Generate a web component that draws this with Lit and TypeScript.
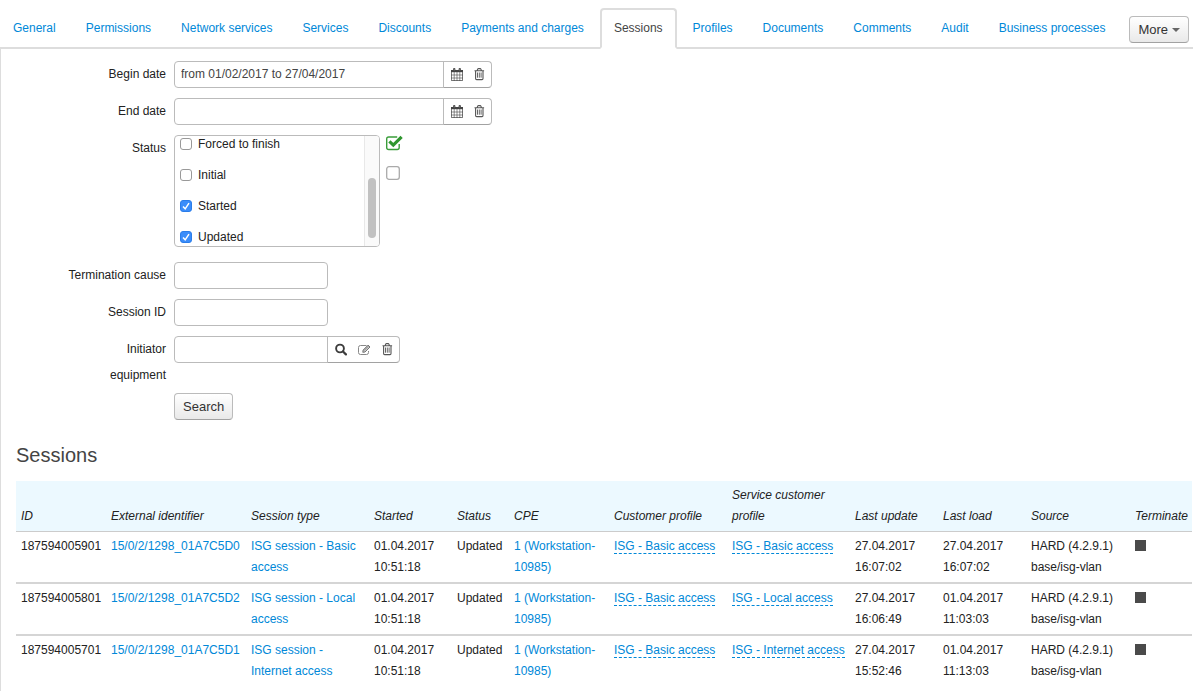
import { LitElement, html, css, svg, nothing } from "lit";
import { customElement, state } from "lit/decorators.js";

interface Tab {
  label: string;
  active?: boolean;
}

interface Session {
  id: string;
  external: string;
  type: string;
  started: string;
  status: string;
  cpe: string;
  customerProfile: string;
  serviceProfile: string;
  lastUpdate: string;
  lastLoad: string;
  source: string;
}

const TABS: Tab[] = [
  { label: "General" },
  { label: "Permissions" },
  { label: "Network services" },
  { label: "Services" },
  { label: "Discounts" },
  { label: "Payments and charges" },
  { label: "Sessions", active: true },
  { label: "Profiles" },
  { label: "Documents" },
  { label: "Comments" },
  { label: "Audit" },
  { label: "Business processes" },
];

const COLUMNS: [string, string][] = [
  ["ID", "c-id"],
  ["External identifier", "c-ext"],
  ["Session type", "c-type"],
  ["Started", "c-started"],
  ["Status", "c-status"],
  ["CPE", "c-cpe"],
  ["Customer profile", "c-customer"],
  ["Service customer profile", "c-service"],
  ["Last update", "c-update"],
  ["Last load", "c-load"],
  ["Source", "c-source"],
  ["Terminate", "c-term"],
];

const SESSIONS: Session[] = [
  {
    id: "187594005901",
    external: "15/0/2/1298_01A7C5D0",
    type: "ISG session - Basic access",
    started: "01.04.2017 10:51:18",
    status: "Updated",
    cpe: "1 (Workstation-10985)",
    customerProfile: "ISG - Basic access",
    serviceProfile: "ISG - Basic access",
    lastUpdate: "27.04.2017 16:07:02",
    lastLoad: "27.04.2017 16:07:02",
    source: "HARD (4.2.9.1) base/isg-vlan",
  },
  {
    id: "187594005801",
    external: "15/0/2/1298_01A7C5D2",
    type: "ISG session - Local access",
    started: "01.04.2017 10:51:18",
    status: "Updated",
    cpe: "1 (Workstation-10985)",
    customerProfile: "ISG - Basic access",
    serviceProfile: "ISG - Local access",
    lastUpdate: "27.04.2017 16:06:49",
    lastLoad: "01.04.2017 11:03:03",
    source: "HARD (4.2.9.1) base/isg-vlan",
  },
  {
    id: "187594005701",
    external: "15/0/2/1298_01A7C5D1",
    type: "ISG session - Internet access",
    started: "01.04.2017 10:51:18",
    status: "Updated",
    cpe: "1 (Workstation-10985)",
    customerProfile: "ISG - Basic access",
    serviceProfile: "ISG - Internet access",
    lastUpdate: "27.04.2017 15:52:46",
    lastLoad: "01.04.2017 11:13:03",
    source: "HARD (4.2.9.1) base/isg-vlan",
  },
];

const icon = (width: number, height: number, body: unknown) => html`
  <svg class="icon" width=${width} height=${height} viewBox="0 0 ${width} ${height}" aria-hidden="true">
    ${body}
  </svg>
`;

const calendarIcon = icon(12, 13, svg`
  <path d="M0.4 3h11.2v9.600h-11.2z" fill="#fff" stroke="#444" stroke-width="0.8" />
  <path d="M0 2h12v2.200h-12z" fill="#444" />
  <path d="M2.600 0.500h1.300v2.500h-1.300zM8.100 0.500h1.300v2.500h-1.300z" fill="#999" stroke="#444" stroke-width="0.900" />
  <path d="M3.200 4v9M6 4v9M8.800 4v9M0 7h12M0 10h12" fill="none" stroke="#444" stroke-width="0.600" />
`);

const trashIcon = icon(11, 13, svg`
  <path d="M0.500 2.700h9.600M3.200 2.500l0.500-1.400q0.200-0.500 0.800-0.500h1.600q0.600 0 0.800 0.500l0.500 1.400" fill="none" stroke="#555" stroke-width="1.100" />
  <path d="M1.600 3v7.500q0 1.100 1 1.100h5.400q1 0 1-1.100V3" fill="none" stroke="#555" stroke-width="1.100" />
  <path d="M3.500 4.500v5.200M5.300 4.500v5.200M7.100 4.500v5.200" fill="none" stroke="#555" stroke-width="0.900" />
`);

const searchIcon = icon(12, 13, svg`
  <circle cx="5" cy="5.500" r="3.900" fill="none" stroke="#3c3c3c" stroke-width="1.900" />
  <path d="M8 8.500l2.900 2.900" fill="none" stroke="#3c3c3c" stroke-width="2.200" stroke-linecap="round" />
`);

const editIcon = icon(13, 12, svg`
  <path d="M8.500 1.500h-6q-2 0-2 2v5q0 2 2 2h6q2 0 2-2v-1.500" fill="none" stroke="#888" />
  <path d="M4.800 8.300l0.300-2.200 5-5 1.900 1.900-5 5z" fill="#ccc" stroke="#666" stroke-width="0.900" />
  <path d="M6 6.600l4.500-4.500" fill="none" stroke="#777" stroke-width="0.800" />
`);

const checkedIcon = icon(17, 16, svg`
  <path d="M13.2 9v3.500q0 2-2 2h-8.500q-2 0-2-2v-8.500q0-2 2-2h8.500" fill="none" stroke="#3a9d3a" stroke-width="1.400" />
  <path d="M3.400 6.400l3.900 3.700 8.300-8.200" fill="none" stroke="#2f962f" stroke-width="3.200" />
`);

const uncheckedIcon = icon(17, 16, svg`
  <rect x="0.700" y="1.700" width="12.600" height="12.600" rx="2.300" fill="none" stroke="#aaa" stroke-width="1.300" />
`);

@customElement("app-root")
export class AppRoot extends LitElement {
  @state() private statuses = [
    { label: "Forced to finish", checked: false },
    { label: "Initial", checked: false },
    { label: "Started", checked: true },
    { label: "Updated", checked: true },
  ];

  static styles = css`
    :host {
      display: block;
      box-sizing: border-box;
      min-height: 100vh;
      background: #fff;
      color: #222;
      font-family: "Liberation Sans", Arial, Helvetica, sans-serif;
      font-size: 12px;
    }
    *,
    *::before {
      box-sizing: border-box;
    }
    a {
      color: #0088d8;
      text-decoration: none;
    }
    .icon {
      display: block;
      flex: none;
    }

    .tabs {
      display: flex;
      align-items: flex-end;
      padding-top: 8px;
      border-bottom: 2px solid #ddd;
      white-space: nowrap;
    }
    .tab-list {
      display: flex;
      gap: 2px;
      margin: 0 0 -2px -1px;
      padding: 0;
      list-style: none;
    }
    .tab {
      display: block;
      height: 41px;
      padding: 0 12px;
      border: 2px solid transparent;
      line-height: 36px;
    }
    .tab.active {
      border-color: #ddd #ddd #fff;
      border-radius: 4px 4px 0 0;
      background: #fff;
      color: #444;
    }

    .button {
      height: 27px;
      padding: 0 8px;
      border: 1px solid #bbb;
      border-bottom-color: #a2a2a2;
      border-radius: 4px;
      background: linear-gradient(#fff, #e9e9e9);
      color: #333;
      font: 13px "Liberation Sans", Arial, sans-serif;
    }
    .more {
      display: flex;
      align-items: center;
      gap: 4px;
      margin: 0 4px 4px auto;
    }

    .panel {
      min-height: calc(100vh - 49px);
      padding: 12px 1px 0 15px;
      border-left: 1px solid #ddd;
    }
    .form {
      display: grid;
      grid-template-columns: 98px 1fr;
      column-gap: 8px;
      align-items: start;
      padding-left: 52px;
    }
    .label {
      margin-bottom: 5px;
      line-height: 26px;
      text-align: right;
    }
    .field {
      display: flex;
      margin-bottom: 10px;
    }
    .field.status {
      gap: 6px;
      margin-bottom: 15px;
    }
    .field.submit {
      grid-column: 2;
    }
    .input {
      width: 154px;
      height: 27px;
      padding: 0 6px 2px;
      border: 1px solid #bbb;
      border-radius: 4px;
      background: #fff;
      color: #444;
      font: 12px "Liberation Sans", Arial, sans-serif;
    }
    .input.date {
      width: 270px;
    }
    .input.joined {
      border-radius: 4px 0 0 4px;
    }
    .addon {
      display: flex;
      align-items: center;
      gap: 11px;
      height: 27px;
      margin-left: -1px;
      padding: 0 6px 0 7px;
      border: 1px solid #bbb;
      border-bottom-color: #a2a2a2;
      border-radius: 0 4px 4px 0;
    }
    .icon-button {
      padding: 0;
      border: 0;
      background: none;
    }

    .status-box {
      display: flex;
      width: 206px;
      height: 112px;
      overflow: hidden;
      border: 1px solid #bbb;
      border-radius: 4px;
    }
    .options {
      flex: 1;
      margin-top: -8px;
      padding-left: 5px;
    }
    .option {
      display: flex;
      align-items: center;
      gap: 6px;
      height: 31px;
    }
    .check {
      flex: none;
      width: 12px;
      height: 12px;
      margin: 0;
      border: 1px solid #999;
      border-radius: 3px;
      background: #fff;
      appearance: none;
    }
    .check:checked {
      border-color: #2b7de9;
      background: #3b8dfa
        url("data:image/svg+xml,%3Csvg xmlns='http://www.w3.org/2000/svg' viewBox='0 0 10 10'%3E%3Cpath d='M2 5.400l2.200 2.400L8 2.200' fill='none' stroke='white' stroke-width='1.500'/%3E%3C/svg%3E");
    }
    .track {
      width: 15px;
      padding: 42px 3px 8px;
      border-left: 1px solid #e8e8e8;
      background: #fafafa;
    }
    .thumb {
      height: 60px;
      border-radius: 4px;
      background: #c1c1c1;
    }
    .toggles {
      display: flex;
      flex-direction: column;
      gap: 14px;
    }

    .title {
      margin: 13px 0 13px;
      color: #444;
      font-size: 20px;
      font-weight: 400;
      line-height: 25px;
    }

    .sessions {
      width: 100%;
      border-collapse: separate;
      border-spacing: 0;
      table-layout: fixed;
      line-height: 21px;
    }
    .sessions th,
    .sessions td {
      padding: 4px 5px;
      text-align: left;
    }
    .sessions th {
      border-bottom: 1px solid #ccc;
      background: #ecf9ff;
      font-style: italic;
      font-weight: 400;
      vertical-align: bottom;
    }
    .sessions td {
      border-bottom: 2px solid #d5d5d5;
      vertical-align: top;
    }
    .sessions tr:last-child td {
      border-bottom: 0;
    }
    .c-id { width: 90px; }
    .c-ext { width: 140px; }
    .c-type { width: 123px; }
    .c-started { width: 83px; }
    .c-status { width: 57px; }
    .c-cpe { width: 100px; }
    .c-customer { width: 118px; }
    .c-service { width: 123px; }
    .c-update { width: 88px; }
    .c-load { width: 88px; }
    .c-source { width: 104px; }
    .c-term { width: 62px; }
    .nowrap {
      white-space: nowrap;
    }
    .dashed {
      border-bottom: 1px dashed #0088d8;
    }
    .stop {
      display: block;
      width: 11px;
      height: 11px;
      margin-top: 4px;
      padding: 0;
      border: 0;
      background: #4a4a4a;
    }
  `;

  private toggle(index: number, event: Event) {
    const checked = (event.target as HTMLInputElement).checked;
    this.statuses = this.statuses.map((s, i) => (i === index ? { ...s, checked } : s));
  }

  private setAll(checked: boolean) {
    this.statuses = this.statuses.map((s) => ({ ...s, checked }));
  }

  private iconButton(name: string, glyph: unknown) {
    return html`<button type="button" class="icon-button" aria-label=${name}>${glyph}</button>`;
  }

  private dateRow(id: string, label: string, value: string) {
    return html`
      <label class="label" for=${id}>${label}</label>
      <div class="field">
        <input class="input date joined" id=${id} type="text" .value=${value} />
        <span class="addon">
          ${this.iconButton("Pick date", calendarIcon)} ${this.iconButton("Clear", trashIcon)}
        </span>
      </div>
    `;
  }

  private textRow(id: string, label: string) {
    return html`
      <label class="label" for=${id}>${label}</label>
      <div class="field"><input class="input" id=${id} type="text" /></div>
    `;
  }

  private sessionRow(s: Session) {
    return html`
      <tr>
        <td>${s.id}</td>
        <td class="nowrap"><a href="#">${s.external}</a></td>
        <td><a href="#">${s.type}</a></td>
        <td>${s.started}</td>
        <td>${s.status}</td>
        <td><a href="#">${s.cpe}</a></td>
        <td class="nowrap"><a class="dashed" href="#">${s.customerProfile}</a></td>
        <td class="nowrap"><a class="dashed" href="#">${s.serviceProfile}</a></td>
        <td>${s.lastUpdate}</td>
        <td>${s.lastLoad}</td>
        <td>${s.source}</td>
        <td><button type="button" class="stop" aria-label="Terminate"></button></td>
      </tr>
    `;
  }

  render() {
    return html`
      <nav class="tabs">
        <ul class="tab-list">
          ${TABS.map(
            (t) => html`<li>
              <a class="tab ${t.active ? "active" : ""}" href="#" aria-current=${t.active ? "page" : nothing}>${t.label}</a>
            </li>`
          )}
        </ul>
        <button type="button" class="button more">
          More
          <svg class="icon" width="8" height="4" viewBox="0 0 8 4" aria-hidden="true">
            <path d="M0 0h8L4 4z" fill="#666" />
          </svg>
        </button>
      </nav>
      <main class="panel">
        <form class="form" @submit=${(e: Event) => e.preventDefault()}>
          ${this.dateRow("begin", "Begin date", "from 01/02/2017 to 27/04/2017")}
          ${this.dateRow("end", "End date", "")}
          <span class="label" id="status-label">Status</span>
          <div class="field status" role="group" aria-labelledby="status-label">
            <div class="status-box">
              <div class="options">
                ${this.statuses.map(
                  (s, i) => html`<label class="option">
                    <input class="check" type="checkbox" .checked=${s.checked} @change=${(e: Event) => this.toggle(i, e)} />
                    ${s.label}
                  </label>`
                )}
              </div>
              <div class="track"><div class="thumb"></div></div>
            </div>
            <div class="toggles">
              <button type="button" class="icon-button" aria-label="Select all" @click=${() => this.setAll(true)}>
                ${checkedIcon}
              </button>
              <button type="button" class="icon-button" aria-label="Select none" @click=${() => this.setAll(false)}>
                ${uncheckedIcon}
              </button>
            </div>
          </div>
          ${this.textRow("cause", "Termination cause")} ${this.textRow("session", "Session ID")}
          <label class="label" for="equipment">Initiator equipment</label>
          <div class="field">
            <input class="input joined" id="equipment" type="text" />
            <span class="addon">
              ${this.iconButton("Find", searchIcon)} ${this.iconButton("Edit", editIcon)}
              ${this.iconButton("Clear", trashIcon)}
            </span>
          </div>
          <div class="field submit"><button type="submit" class="button">Search</button></div>
        </form>
        <h2 class="title">Sessions</h2>
        <table class="sessions">
          <thead>
            <tr>
              ${COLUMNS.map(([label, cls]) => html`<th class=${cls} scope="col">${label}</th>`)}
            </tr>
          </thead>
          <tbody>
            ${SESSIONS.map((s) => this.sessionRow(s))}
          </tbody>
        </table>
      </main>
    `;
  }
}
